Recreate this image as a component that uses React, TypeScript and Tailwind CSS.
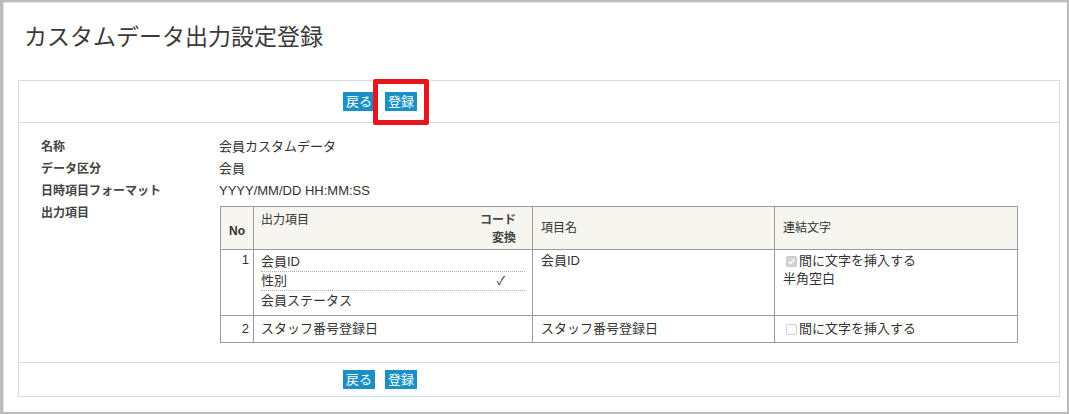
const jp = "font-['Liberation_Sans','Noto_Sans_CJK_JP',sans-serif]";

function Btn({ label }: { label: string }) {
	return (
		<span className="inline-flex h-[19px] items-center bg-[#1a90c6] px-[3px] text-[13px] leading-none text-white">
			{label}
		</span>
	);
}

function ButtonBar({ highlight }: { highlight?: boolean }) {
	return (
		<div className="relative flex h-[41px] items-center gap-[10px] pl-[324px]">
			<Btn label="戻る" />
			<Btn label="登録" />
			{highlight && (
				<span className="absolute left-[354px] top-[-2px] h-[46px] w-[56px] rounded-[2px] border-[5px] border-[#e8141e]" />
			)}
		</div>
	);
}

function Check({ checked }: { checked?: boolean }) {
	return (
		<span className={`mr-[2px] inline-flex h-[11px] w-[11px] items-center justify-center rounded-[2px] border ${checked ? "border-[#c8c8c8] bg-[#d4d4d4]" : "border-[#cfcfcf] bg-white"}`}>
			{checked && (
				<svg viewBox="0 0 10 10" className="h-[9px] w-[9px]">
					<path d="M2 5.2l2 2 4-4.4" fill="none" stroke="#fff" strokeWidth="1.6" />
				</svg>
			)}
		</span>
	);
}

const fields = [
	{ label: "名称", value: "会員カスタムデータ" },
	{ label: "データ区分", value: "会員" },
	{ label: "日時項目フォーマット", value: "YYYY/MM/DD HH:MM:SS" },
];

export default function App() {
	return (
		<div className={`h-[414px] w-[1069px] overflow-hidden border-2 border-l-[3px] border-[#bcbcbc] bg-white text-[#333] ${jp}`}>
			<div className="h-full border-l border-t border-[#e4e4e4] pr-[7px] pt-[2px] pl-[14px]">
				{/* title */}
				<h1 className="pl-[6px] pt-[17px] text-[23px] font-normal leading-[30px] text-[#3a3a3a]">
					カスタムデータ出力設定登録
				</h1>

				{/* panel */}
				<div className="mt-[28px] border border-[#d3dde6]">
					<ButtonBar highlight />

					<div className="border-y border-[#d3dde6] pb-[19px] pt-[13px] pl-[22px]">
						{fields.map((f) => (
							<div key={f.label} className="flex h-[22px] items-center">
								<div className="w-[178px] text-[12px] font-bold text-[#444]">{f.label}</div>
								<div className="text-[13px]">{f.value}</div>
							</div>
						))}
						<div className="flex items-start">
							<div className="w-[179px] pt-[3px] text-[12px] font-bold leading-[16px] text-[#444]">出力項目</div>
							<table className="mt-[4px] w-[798px] border-collapse border-[1.5px] border-[#8c8c8c] text-[13px]">
								<thead>
									<tr className="h-[43px] bg-[#f7f5ef]">
										<th className="w-[33px] border border-[#9a9a9a] pt-[6px] text-center align-middle text-[12px] font-bold">No</th>
										<th className="w-[279px] border border-[#9a9a9a] pl-[7px] pr-[16px] align-top font-normal">
											<div className="flex justify-between pt-[4px] text-[12px] leading-[18px]">
												<span>出力項目</span>
												<span className="text-right font-bold text-[#444]">コード<br />変換</span>
											</div>
										</th>
										<th className="w-[242px] border border-[#9a9a9a] px-[8px] text-left text-[12px] font-normal">項目名</th>
										<th className="border border-[#9a9a9a] px-[8px] text-left text-[12px] font-normal">連結文字</th>
									</tr>
								</thead>
								<tbody>
									<tr className="h-[66px]">
										<td className="border border-[#9a9a9a] pr-[4px] pt-[1px] text-right align-top leading-[18px]">1</td>
										<td className="border border-[#9a9a9a] px-[7px] pt-[3px] align-top">
											<div className="flex h-[19px] items-center border-b border-dotted border-[#b0b0b0]">会員ID</div>
											<div className="flex h-[19px] items-center justify-between border-b border-dotted border-[#b0b0b0] pr-[20px]">
												<span>性別</span>
												<span className="text-[12px]">✓</span>
											</div>
											<div className="flex h-[19px] items-center">会員ステータス</div>
										</td>
										<td className="border border-[#9a9a9a] px-[8px] pt-[2px] align-top leading-[18px]">会員ID</td>
										<td className="border border-[#9a9a9a] px-[8px] pt-[2px] align-top leading-[18px]">
											<div className="flex items-center pl-[3px]">
												<Check checked />
												間に文字を挿入する
											</div>
											<div>半角空白</div>
										</td>
									</tr>
									<tr className="h-[27px]">
										<td className="border border-[#9a9a9a] pr-[4px] text-right">2</td>
										<td className="border border-[#9a9a9a] px-[7px]">スタッフ番号登録日</td>
										<td className="border border-[#9a9a9a] px-[8px]">スタッフ番号登録日</td>
										<td className="border border-[#9a9a9a] px-[8px]">
											<div className="flex items-center pl-[3px]">
												<Check />
												間に文字を挿入する
											</div>
										</td>
									</tr>
								</tbody>
							</table>
						</div>
					</div>

					<div className="flex h-[33px] items-center gap-[10px] pl-[324px]">
						<Btn label="戻る" />
						<Btn label="登録" />
					</div>
				</div>
			</div>
		</div>
	);
}
